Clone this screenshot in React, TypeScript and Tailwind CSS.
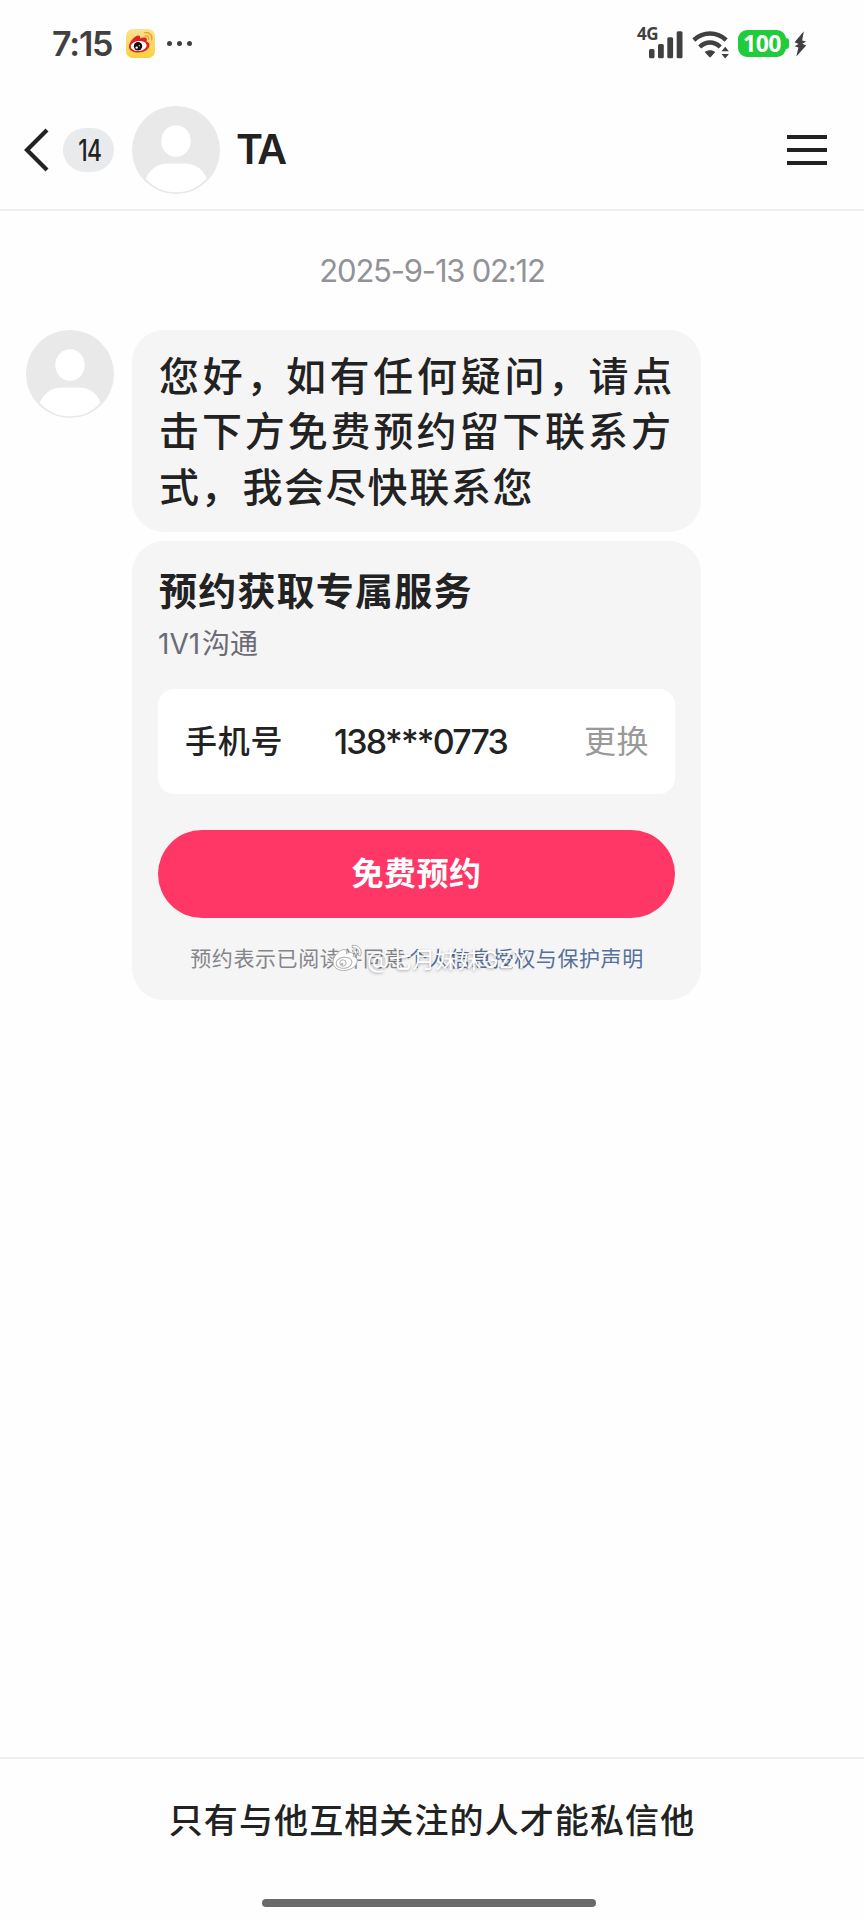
import type { ReactNode } from "react";

const CJK = "font-['Inter','Noto_Sans_CJK_SC',sans-serif]";

function Avatar() {
  return (
    <svg className="size-[88px] shrink-0" viewBox="0 0 88 88">
      <circle cx="44" cy="44" r="44" fill="#e9e9e9" />
      <ellipse cx="44" cy="35" rx="14.7" ry="15.8" fill="#fff" />
      <path d="M13.5 72.5C20 60 29 57.5 36 57.5H53C61 57.5 70 61 74.500 72.500C66 82 56 86.300 44 86.300C32 86.300 22 82 13.500 72.500Z" fill="#fff" />
    </svg>
  );
}

function WeiboAppIcon() {
  return (
    <svg className="size-[29px]" viewBox="0 0 29 29">
      <defs>
        <linearGradient id="weiboBg" x1="0" y1="0" x2="0" y2="1">
          <stop offset="0" stopColor="#fbe293" />
          <stop offset="1" stopColor="#fad03c" />
        </linearGradient>
      </defs>
      <rect width="29" height="29" rx="7" fill="url(#weiboBg)" />
      <path d="M3 17.500C3 13 9 6.500 12.500 6.500C14.500 6.500 14.500 8.500 14.200 9.500C16.500 8.300 20.500 7.800 20.800 10C21 11 20.500 12 20.500 12.500C22 13 23.500 14 23.500 16C23.500 20.500 18 23.500 12.500 23.500C7 23.500 3 21.500 3 17.500Z" fill="#e0202a" />
      <ellipse cx="12.700" cy="17" rx="8" ry="5" fill="#fff" transform="rotate(-8 12.700 17)" />
      <circle cx="12" cy="17.300" r="4.200" fill="#111" />
      <circle cx="10.700" cy="18.600" r="1.200" fill="#fff" />
      <circle cx="13.200" cy="16.700" r="0.600" fill="#fff" />
      <g fill="none" stroke="#eda22d" strokeWidth="1.500" strokeLinecap="round">
        <path d="M18.800 3.700C23.300 2.900 26.700 6.500 25.600 11" />
        <path d="M19.300 6.900C21.600 6.500 23.200 8.200 22.600 10.300" />
      </g>
    </svg>
  );
}

function SignalIcons() {
  return (
    <div className="flex">
      <span className="mt-[-5px] mr-[-9px] inline-block h-5 font-['Noto_Sans',sans-serif] text-[17px] leading-5 font-bold tracking-[-0.500px]">4G</span>
      <svg className="h-[30px] w-[82px]" viewBox="12 0 82 30" fill="#404040">
        <rect x="12" y="20" width="5.500" height="9.300" rx="1.500" />
        <rect x="21" y="15" width="5.800" height="14.300" rx="1.500" />
        <rect x="30.300" y="8.300" width="5.800" height="21" rx="1.500" />
        <rect x="39.700" y="2.300" width="5.800" height="27" rx="1.500" />
        <g fill="none" stroke="#404040" strokeWidth="4.400">
          <path d="M56.800 11C66.500 2.400 79.500 2.400 89.200 11" />
          <path d="M62.700 18C69 12 77 12 83.300 18" />
        </g>
        <path d="M67.700 23C71 20.700 75 20.700 78.300 23L74 27.800Q73 28.800 72 27.800Z" />
        <path d="M84.500 22.300L88.200 17.800L91.900 22.300ZM84.500 25L88.200 29.500L91.900 25Z" />
      </svg>
    </div>
  );
}

function Battery() {
  return (
    <div className="ml-[7px] flex items-center">
      <div className="flex h-[27px] w-12 items-center justify-center rounded-[9px] bg-[#20cc3c] pb-px font-['Noto_Sans',sans-serif] text-[23px] leading-none font-bold tracking-[-0.500px] text-white">
        100
      </div>
      <div className="h-[11px] w-[3px] rounded-r-[3px] bg-[#20cc3c]" />
      <svg className="ml-[5px] h-[26px] w-[13px]" viewBox="0 0 13 26" fill="#404040">
        <path d="M9.800 0.300L0.600 11.200L4.600 13L0.600 15.200L4.400 16.500L2.300 25.600L12.200 14.600L8.200 12.800L12.200 10.600L8.200 9.400Z" />
      </svg>
    </div>
  );
}

function StatusBar() {
  return (
    <div className="flex h-[87px] items-center pr-[57px] pl-[52px] text-[#404040]">
      <span className="w-[74px] font-['Inter',sans-serif] text-[34px] leading-none font-semibold tracking-[-1.200px]">7:15</span>
      <WeiboAppIcon />
      <div className="ml-[12px] flex gap-[5px]">
        <i className="size-[5px] rounded-full bg-[#404040]" />
        <i className="size-[5px] rounded-full bg-[#404040]" />
        <i className="size-[5px] rounded-full bg-[#404040]" />
      </div>
      <div className="ml-auto flex items-center">
        <SignalIcons />
        <Battery />
      </div>
    </div>
  );
}

function Header() {
  return (
    <header className="flex h-[124px] items-center border-b-2 border-[#f0f0f0] pt-[3px] pr-[37px] pl-6">
      <svg className="h-[44px] w-[25px]" viewBox="0 0 25 44" fill="none" stroke="#222" strokeWidth="4.200">
        <path d="M23 2L3 22L23 42" />
      </svg>
      <span className="ml-[14px] flex h-11 w-[51px] items-center justify-center rounded-full bg-[#e9eaec] text-[#222]">
        <b className="inline-block scale-x-[0.76] pl-[3px] font-['Inter',sans-serif] text-[30px] leading-none font-medium tracking-[-1px]">14</b>
      </span>
      <div className="ml-[18px] flex">
        <Avatar />
      </div>
      <span className="ml-[16px] font-['Inter',sans-serif] text-[41px] leading-none font-semibold tracking-[-2.200px] text-[#222]">TA</span>
      <div className="ml-auto flex flex-col gap-[9px]">
        <i className="h-1 w-10 bg-[#222]" />
        <i className="h-1 w-10 bg-[#222]" />
        <i className="h-1 w-10 bg-[#222]" />
      </div>
    </header>
  );
}

function Comma({ className }: { className: string }) {
  return <span className={className}>，</span>;
}

function Line({ className, children }: { className: string; children: ReactNode }) {
  return <span className={`block whitespace-nowrap ${className}`}>{children}</span>;
}

function Greeting() {
  return (
    <div className="h-[202px] w-[569px] rounded-[32px] bg-[#f5f5f5] pt-[19px] pl-[27px] text-[40px] leading-[55.300px] font-medium text-[#222]">
      <Line className="tracking-[3.700px]">
        您好<Comma className="tracking-[-0.500px]" />如有任何疑问<Comma className="tracking-[0.500px]" />请点
      </Line>
      <Line className="tracking-[2.900px]">击下方免费预约留下联系方</Line>
      <Line className="tracking-[1.700px]">式，我会尽快联系您</Line>
    </div>
  );
}

function Watermark() {
  return (
    <span className="absolute top-0 left-[174px] flex items-center text-[22.500px] leading-[30px] tracking-[0.600px] whitespace-nowrap text-white [text-shadow:0_1px_3px_rgba(0,0,0,0.35)]">
      <svg className="mt-[-5px] mr-[3px] h-[28px] w-[32px]" viewBox="0 0 32 28" fill="none" stroke="#b0b0b0" strokeWidth="1">
        <path fill="#fff" d="M1 18C1 12 8 5.500 12 5.500C14.500 5.500 14.800 7.500 14.300 9.500C18 7.700 22.500 8 21.300 12.500C24.500 13.500 26 15.500 25 18.500C23.500 23.500 17 26.500 11.500 26.500C6 26.500 1 23.500 1 18Z" />
        <ellipse cx="12" cy="18.700" rx="8" ry="5.500" transform="rotate(-8 12 18.700)" />
        <circle cx="11" cy="19" r="3.200" />
        <circle cx="10.200" cy="20" r="1.200" fill="#b0b0b0" stroke="none" />
        <path d="M20 1.500C26.500 0 31 6 28.500 12L26.300 11.300C28 7 25 3 20.500 4ZM20.500 6C23.500 5.300 25.800 8 24.600 11L22.800 10.500C23.500 8.800 22.500 7.500 20.800 8Z" fill="#fff" />
      </svg>
      @七月妹妹GZY
    </span>
  );
}

function BookingCard() {
  return (
    <div className="mt-[9px] flex h-[459px] w-[569px] flex-col rounded-[32px] bg-[#f5f5f5] px-[26px] text-[#222]">
      <h2 className="mt-[22px] pl-px text-[38px] leading-[56px] font-bold tracking-[1.200px]">预约获取专属服务</h2>
      <p className="mt-[2px] text-[28px] leading-[46px] text-[#6b6b75]">
        <span className="mr-[2px]">1V1</span>沟通
      </p>
      <div className="mt-[22px] flex h-[105px] items-center rounded-[16px] bg-white pr-[26px] pl-[27px] text-[32px] leading-none font-medium">
        <span className="w-[149px] tracking-[0.700px]">手机号</span>
        <span className="text-[34px] tracking-[-1.800px]">138***0773</span>
        <span className="ml-auto font-normal tracking-[0.500px] text-[#999]">更换</span>
      </div>
      <button className="mt-9 h-[88px] rounded-full bg-[#ff3766] text-[32px] font-bold tracking-[0.500px] text-white">免费预约</button>
      <p className="relative mt-[27px] pl-px text-center text-[21px] leading-[28px] tracking-[0.600px] whitespace-nowrap text-[#85858c]">
        预约表示已阅读并同意<a className="text-[#55709c]">个人信息授权与保护声明</a>
        <Watermark />
      </p>
    </div>
  );
}

export default function App() {
  return (
    <div className={`flex h-[1920px] w-[864px] flex-col bg-[#fefefe] ${CJK}`}>
      <StatusBar />
      <Header />
      <main className="flex grow flex-col">
        <time className="mt-[41px] text-center text-[31px] leading-[38px] tracking-[-1.200px] text-[#929299]">2025-9-13 02:12</time>
        <div className="mt-10 flex gap-[18px] pl-[26px]">
          <Avatar />
          <div>
            <Greeting />
            <BookingCard />
          </div>
        </div>
      </main>
      <footer className="flex h-[163px] flex-col items-center border-t-2 border-[#f0f0f0]">
        <p className="mt-[38px] text-[34px] leading-[48px] font-medium tracking-[1.100px] text-[#222]">只有与他互相关注的人才能私信他</p>
        <div className="mt-[54px] mr-[6px] h-2 w-[334px] rounded-full bg-[#6a6a6a]" />
      </footer>
    </div>
  );
}
